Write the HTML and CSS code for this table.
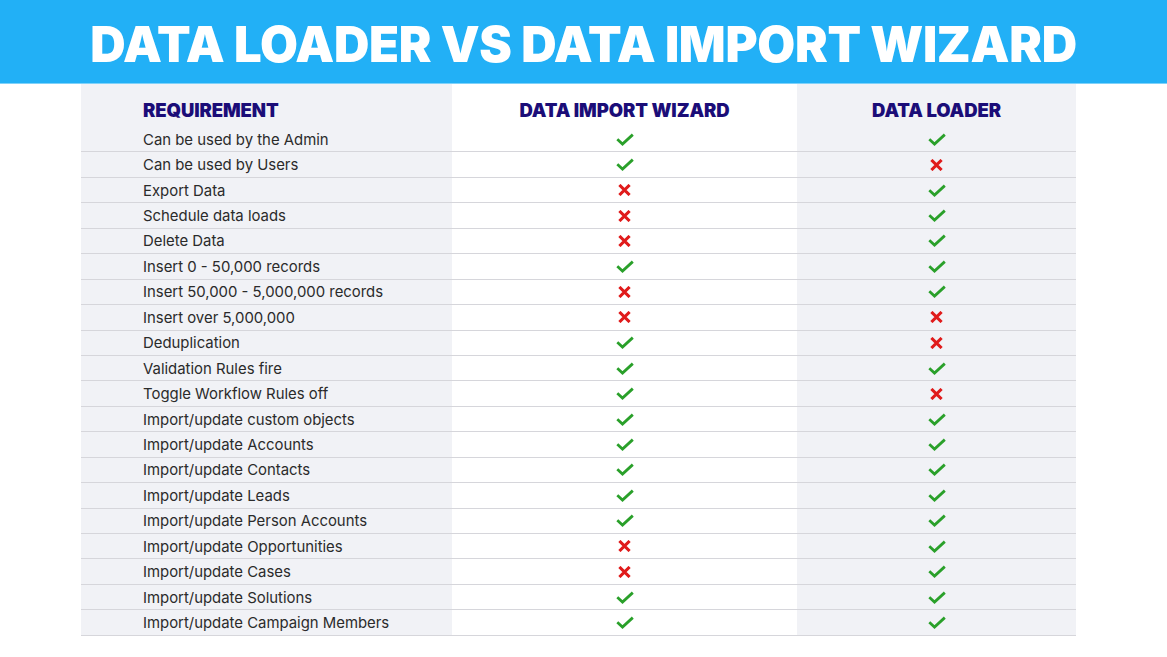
FILE: index.html
```html
<!DOCTYPE html>
<html>
<head>
<meta charset="utf-8">
<link rel="stylesheet" href="styles.css">
</head>
<body>
<header class="banner"><h1>DATA LOADER VS DATA IMPORT WIZARD</h1></header>
<div class="table" id="t">
  <div class="cell c1 head"><span>REQUIREMENT</span></div>
  <div class="cell c2 head">DATA IMPORT WIZARD</div>
  <div class="cell c3 head">DATA LOADER</div>
</div>
<svg width="0" height="0" style="position:absolute">
  <defs>
    <symbol id="ok" viewBox="0 0 18 13"><path d="M1.3 6.3 L6.5 11 L16.8 1.6" fill="none" stroke="#2aa02a" stroke-width="2.8" stroke-linejoin="miter"/></symbol>
    <symbol id="no" viewBox="0 0 13 12"><path d="M1.4 1 L11.6 11 M11.6 1 L1.4 11" fill="none" stroke="#e01b1b" stroke-width="3.1"/></symbol>
  </defs>
</svg>
<script src="app.js"></script>
</body>
</html>
```
FILE: app.js
```js
const rows = [
  ["Can be used by the Admin",1,1],
  ["Can be used by Users",1,0],
  ["Export Data",0,1],
  ["Schedule data loads",0,1],
  ["Delete Data",0,1],
  ["Insert 0 - 50,000 records",1,1],
  ["Insert 50,000 - 5,000,000 records",0,1],
  ["Insert over 5,000,000",0,0],
  ["Deduplication",1,0],
  ["Validation Rules fire",1,1],
  ["Toggle Workflow Rules off",1,0],
  ["Import/update custom objects",1,1],
  ["Import/update Accounts",1,1],
  ["Import/update Contacts",1,1],
  ["Import/update Leads",1,1],
  ["Import/update Person Accounts",1,1],
  ["Import/update Opportunities",0,1],
  ["Import/update Cases",0,1],
  ["Import/update Solutions",1,1],
  ["Import/update Campaign Members",1,1]
];
const t = document.getElementById('t');
function icon(v){
  return v ? '<svg class="ok" width="18" height="13"><use href="#ok"/></svg>'
           : '<svg class="no" width="13" height="12"><use href="#no"/></svg>';
}
let html = '';
for (const [label,a,b] of rows){
  html += '<div class="cell c1 row"><span>'+label+'</span></div>';
  html += '<div class="cell c2 row">'+icon(a)+'</div>';
  html += '<div class="cell c3 row">'+icon(b)+'</div>';
}
t.insertAdjacentHTML('beforeend', html);
```
FILE: styles.css
```css
html, body {
  margin: 0;
  padding: 0;
  background: #ffffff;
}
.banner {
  height: 83px;
  background: #22b0f6;
  border-bottom: 1px solid #7fd2fa;
  display: flex;
  align-items: center;
  justify-content: center;
}
.banner h1 {
  margin: 0;
  color: #ffffff;
  font-family: Inter, "Liberation Sans", sans-serif;
  font-weight: 900;
  font-size: 49px;
  letter-spacing: -0.3px;
  line-height: 1;
  padding-top: 6px;
}
.table {
  margin-left: 81px;
  width: 995px;
  display: grid;
  grid-template-columns: 371px 345px 279px;
  grid-template-rows: 43px;
  grid-auto-rows: 25.45px;
}
.cell {
  display: flex;
  align-items: center;
  box-sizing: border-box;
}
.c1, .c3 { background: #f1f2f6; }
.c2 { background: #ffffff; }
.c2, .c3 { justify-content: center; }
.c1 { padding-left: 62px; }
.head {
  font-family: Inter, "Liberation Sans", sans-serif;
  font-weight: 900;
  font-size: 18.5px;
  color: #1b0d78;
  padding-top: 9px;
  letter-spacing: -0.1px;
}
.row {
  border-bottom: 1.5px solid #d6d6db;
  font-family: Inter, "Liberation Sans", sans-serif;
  font-size: 14.9px;
  color: #2b2b2b;
}
.c1.row { padding-top: 1px; }
.row svg { display: block; }
```
